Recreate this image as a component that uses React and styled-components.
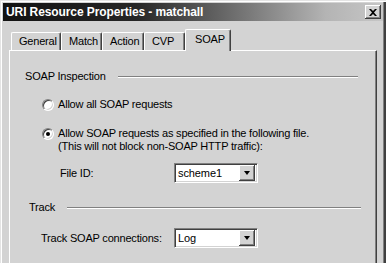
import React from 'react';
import styled, { createGlobalStyle } from 'styled-components';

const GlobalStyle = createGlobalStyle`
  html, body {
    margin: 0;
    padding: 0;
    background: #d3d3d3;
  }
  body {
    font-family: "Liberation Sans", Arial, sans-serif;
    font-size: 11px;
    color: #000;
  }
`;

const Window = styled.div`
  width: 386px;
  height: 263px;
  box-sizing: border-box;
  padding: 3px 3px 0 3px;
  background: #d3d3d3;
  box-shadow: inset 1px 1px #e4e4e4, inset 2px 2px #fff, inset -2px 0 #404040, inset -3px 0 #808080;
  overflow: hidden;
`;

const TitleBar = styled.div`
  height: 18px;
  display: flex;
  align-items: center;
  justify-content: space-between;
  padding: 0 2px 0 3px;
  background: linear-gradient(90deg, #121212 0%, #262626 35%, #7a7a7a 65%, #b4b4b4 85%, #c6c6c6 100%);
`;

const Title = styled.span`
  color: #fff;
  font-weight: bold;
  font-size: 12px;
  letter-spacing: -0.1px;
`;

const CloseButton = styled.div`
  width: 16px;
  height: 14px;
  box-sizing: border-box;
  background: #d3d3d3;
  box-shadow: inset -1px -1px #404040, inset 1px 1px #fff, inset -2px -2px #808080;
  display: flex;
  align-items: center;
  justify-content: center;
`;

const Body = styled.div`
  padding: 8px 6px 0 6px;
`;

const TabStrip = styled.div`
  display: flex;
  align-items: flex-end;
  height: 21px;
  padding-left: 2px;
`;

const Tab = styled.div`
  box-sizing: border-box;
  width: ${p => p.$w}px;
  height: ${p => (p.$active ? 22 : 18)}px;
  margin-bottom: ${p => (p.$active ? -1 : 0)}px;
  padding-left: ${p => (p.$active ? 9 : 7)}px;
  padding-top: ${p => (p.$active ? 3 : 2)}px;
  line-height: 13px;
  letter-spacing: -0.2px;
  background: #d3d3d3;
  border-radius: 2px 2px 0 0;
  border-top: 1px solid #fff;
  border-left: 1px solid #fff;
  border-right: 1px solid #404040;
  box-shadow: inset -1px 0 #808080;
  position: ${p => (p.$active ? 'relative' : 'static')};
  z-index: ${p => (p.$active ? 1 : 0)};
`;

const Panel = styled.div`
  width: 368px;
  height: 230px;
  box-sizing: border-box;
  padding-top: 19px;
  border-top: 1px solid #fff;
  border-left: 1px solid #fff;
  border-right: 1px solid #404040;
  box-shadow: inset -1px 0 #808080;
`;

const GroupHeader = styled.div`
  display: flex;
  align-items: center;
  gap: 12px;
  height: 13px;
  padding-left: ${p => p.$indent}px;
  padding-right: ${p => p.$right}px;
  margin-top: ${p => p.$top || 0}px;
`;

const Legend = styled.span`
  line-height: 13px;
  letter-spacing: -0.2px;
`;

const Rule = styled.div`
  flex: 1;
  height: 0;
  border-top: 1px solid #808080;
  border-bottom: 1px solid #fff;
`;

const RadioRow = styled.label`
  display: flex;
  align-items: flex-start;
  gap: 4px;
  margin-left: 32px;
  margin-top: ${p => p.$top}px;
  line-height: 13px;
  letter-spacing: -0.2px;
`;

const RadioCircle = styled.span`
  flex: none;
  width: 12px;
  height: 12px;
  box-sizing: border-box;
  margin-top: 1px;
  border-radius: 50%;
  border: 1px solid;
  border-color: #808080 #fff #fff #808080;
  background: #fff;
  box-shadow: inset 1px 1px #404040, inset -1px -1px #d3d3d3;
  display: flex;
  align-items: center;
  justify-content: center;

  &::after {
    content: '';
    width: 4px;
    height: 4px;
    border-radius: 50%;
    background: ${p => (p.$checked ? '#000' : 'transparent')};
  }
`;

const FieldRow = styled.div`
  display: grid;
  grid-template-columns: 164px 84px;
  align-items: center;
  margin-top: ${p => p.$top}px;
`;

const FieldLabel = styled.span`
  padding-left: ${p => p.$indent}px;
  letter-spacing: -0.2px;
`;

const SelectBox = styled.div`
  height: 20px;
  box-sizing: border-box;
  border: 1px solid;
  border-color: #808080 #fff #fff #808080;
  box-shadow: inset 1px 1px #404040, inset -1px -1px #d3d3d3;
  background: #fff;
  display: flex;
  align-items: center;
  justify-content: space-between;
  padding: 1px 2px 1px 3px;
`;

const SelectValue = styled.span`
  line-height: 16px;
  letter-spacing: -0.1px;
`;

const DropButton = styled.div`
  width: 16px;
  height: 16px;
  box-sizing: border-box;
  background: #d3d3d3;
  box-shadow: inset -1px -1px #404040, inset 1px 1px #fff, inset -2px -2px #808080;
  display: flex;
  align-items: center;
  justify-content: center;

  &::after {
    content: '';
    width: 0;
    height: 0;
    border-left: 3.5px solid transparent;
    border-right: 3.5px solid transparent;
    border-top: 4px solid #000;
  }
`;

const Select = ({ value }) => (
  <SelectBox>
    <SelectValue>{value}</SelectValue>
    <DropButton />
  </SelectBox>
);

const tabs = [
  { name: 'General', w: 50 },
  { name: 'Match', w: 41 },
  { name: 'Action', w: 42 },
  { name: 'CVP', w: 41 },
  { name: 'SOAP', w: 46, active: true },
];

export default function App() {
  return (
    <>
      <GlobalStyle />
      <Window>
        <TitleBar>
          <Title>URI Resource Properties - matchall</Title>
          <CloseButton>
            <svg width="8" height="7" viewBox="0 0 8 7">
              <path d="M0 0h2l2 2 2-2h2L5 3.5 8 7H6L4 5 2 7H0l3-3.5z" fill="#000" />
            </svg>
          </CloseButton>
        </TitleBar>
        <Body>
          <TabStrip>
            {tabs.map(t => (
              <Tab key={t.name} $w={t.w} $active={t.active}>{t.name}</Tab>
            ))}
          </TabStrip>
          <Panel>
            <GroupHeader $indent={15} $right={18}>
              <Legend>SOAP Inspection</Legend>
              <Rule />
            </GroupHeader>
            <RadioRow $top={15}>
              <RadioCircle />
              <span>Allow all SOAP requests</span>
            </RadioRow>
            <RadioRow $top={16}>
              <RadioCircle $checked />
              <span>
                Allow SOAP requests as specified in the following file.
                <br />
                (This will not block non-SOAP HTTP traffic):
              </span>
            </RadioRow>
            <FieldRow $top={10}>
              <FieldLabel $indent={50}>File ID:</FieldLabel>
              <Select value="scheme1" />
            </FieldRow>
            <GroupHeader $indent={19} $right={15} $top={18}>
              <Legend>Track</Legend>
              <Rule />
            </GroupHeader>
            <FieldRow $top={14}>
              <FieldLabel $indent={31}>Track SOAP connections:</FieldLabel>
              <Select value="Log" />
            </FieldRow>
          </Panel>
        </Body>
      </Window>
    </>
  );
}
